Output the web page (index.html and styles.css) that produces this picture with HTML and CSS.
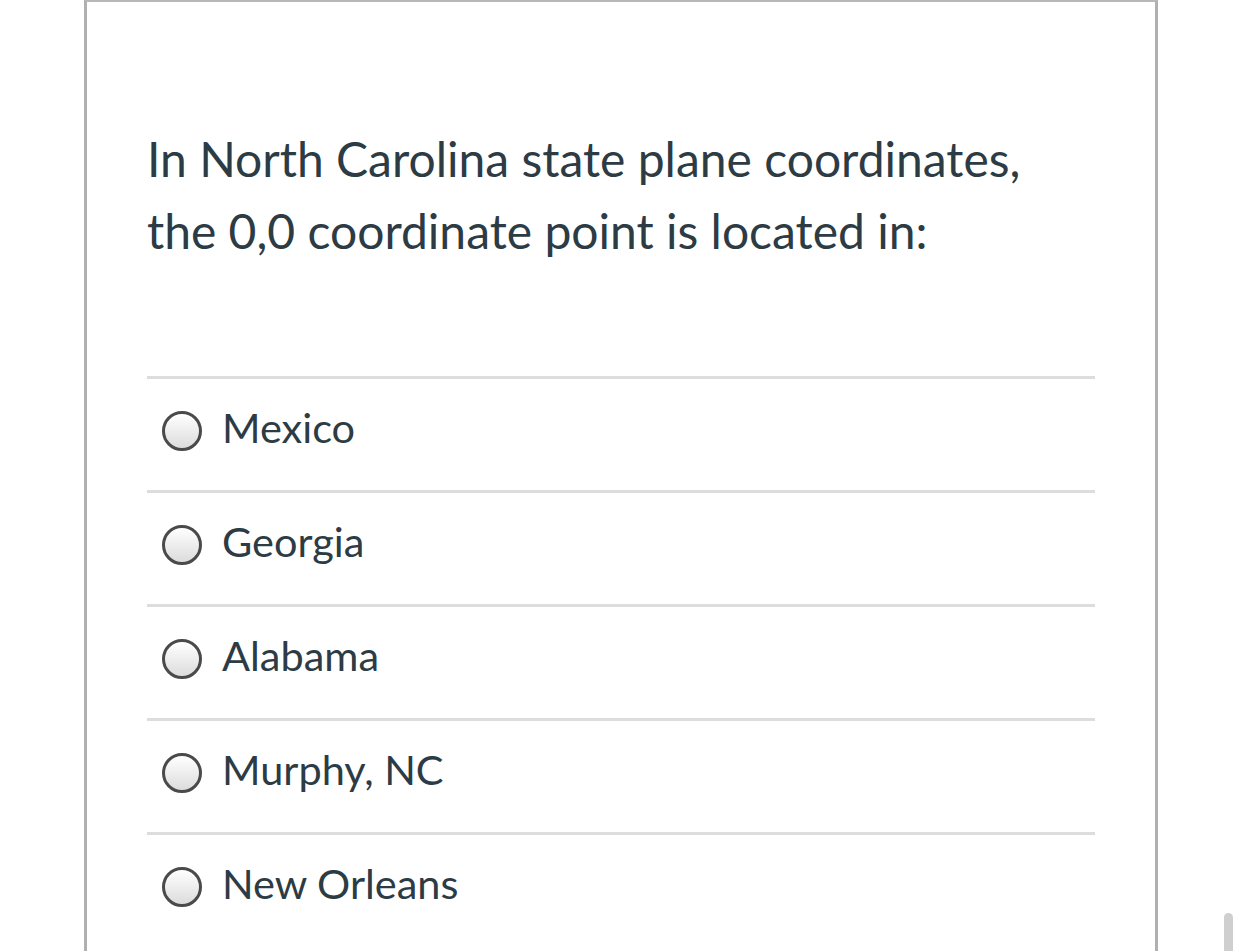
FILE: index.html
```html
<!DOCTYPE html>
<html lang="en">
<head>
<meta charset="utf-8">
<title>Quiz question</title>
<link rel="stylesheet" href="styles.css">
</head>
<body>
<div class="page">
  <div class="card">
    <div class="question">In North Carolina state plane coordinates, the 0,0 coordinate point is located in:</div>
    <div class="answers">
      <label class="answer"><span class="radio"></span><span class="label">Mexico</span></label>
      <label class="answer"><span class="radio"></span><span class="label">Georgia</span></label>
      <label class="answer"><span class="radio"></span><span class="label">Alabama</span></label>
      <label class="answer"><span class="radio"></span><span class="label">Murphy, NC</span></label>
      <label class="answer"><span class="radio"></span><span class="label">New Orleans</span></label>
    </div>
  </div>
  <div class="scroll-thumb"></div>
</div>
</body>
</html>
```
FILE: styles.css
```css
html, body {
  margin: 0;
  padding: 0;
  background: #ffffff;
  height: 100%;
  overflow: hidden;
}
.page {
  position: relative;
  height: 951px;
  font-family: Lato, "Open Sans", sans-serif;
  color: #2d3b45;
}
.card {
  margin-left: 84px;
  width: 1074px;
  height: 951px;
  box-sizing: border-box;
  border-left: 3px solid #b0b0b0;
  border-right: 3px solid #b0b0b0;
  border-top: 2px solid #b8b8b8;
  padding: 0 60px;
}
.question {
  padding-top: 121px;
  font-size: 48px;
  line-height: 72px;
  padding-right: 40px;
}
.answers {
  margin-top: 109px;
}
.answer {
  display: flex;
  align-items: center;
  height: 95px;
  border-top: 3px solid #dddddd;
  padding-left: 15px;
  padding-bottom: 16px;
}
.radio {
  width: 34px;
  height: 34px;
  border: 3px solid #4a4a4a;
  border-radius: 50%;
  background: linear-gradient(#ffffff, #dcdcdc);
  flex: none;
  margin-top: 9px;
}
.label {
  margin-left: 20px;
  font-size: 41.5px;
  line-height: 48px;
}
.scroll-thumb {
  position: absolute;
  left: 1224px;
  top: 913px;
  width: 9px;
  height: 60px;
  border-radius: 5px;
  background: #cfcfcf;
}
```
